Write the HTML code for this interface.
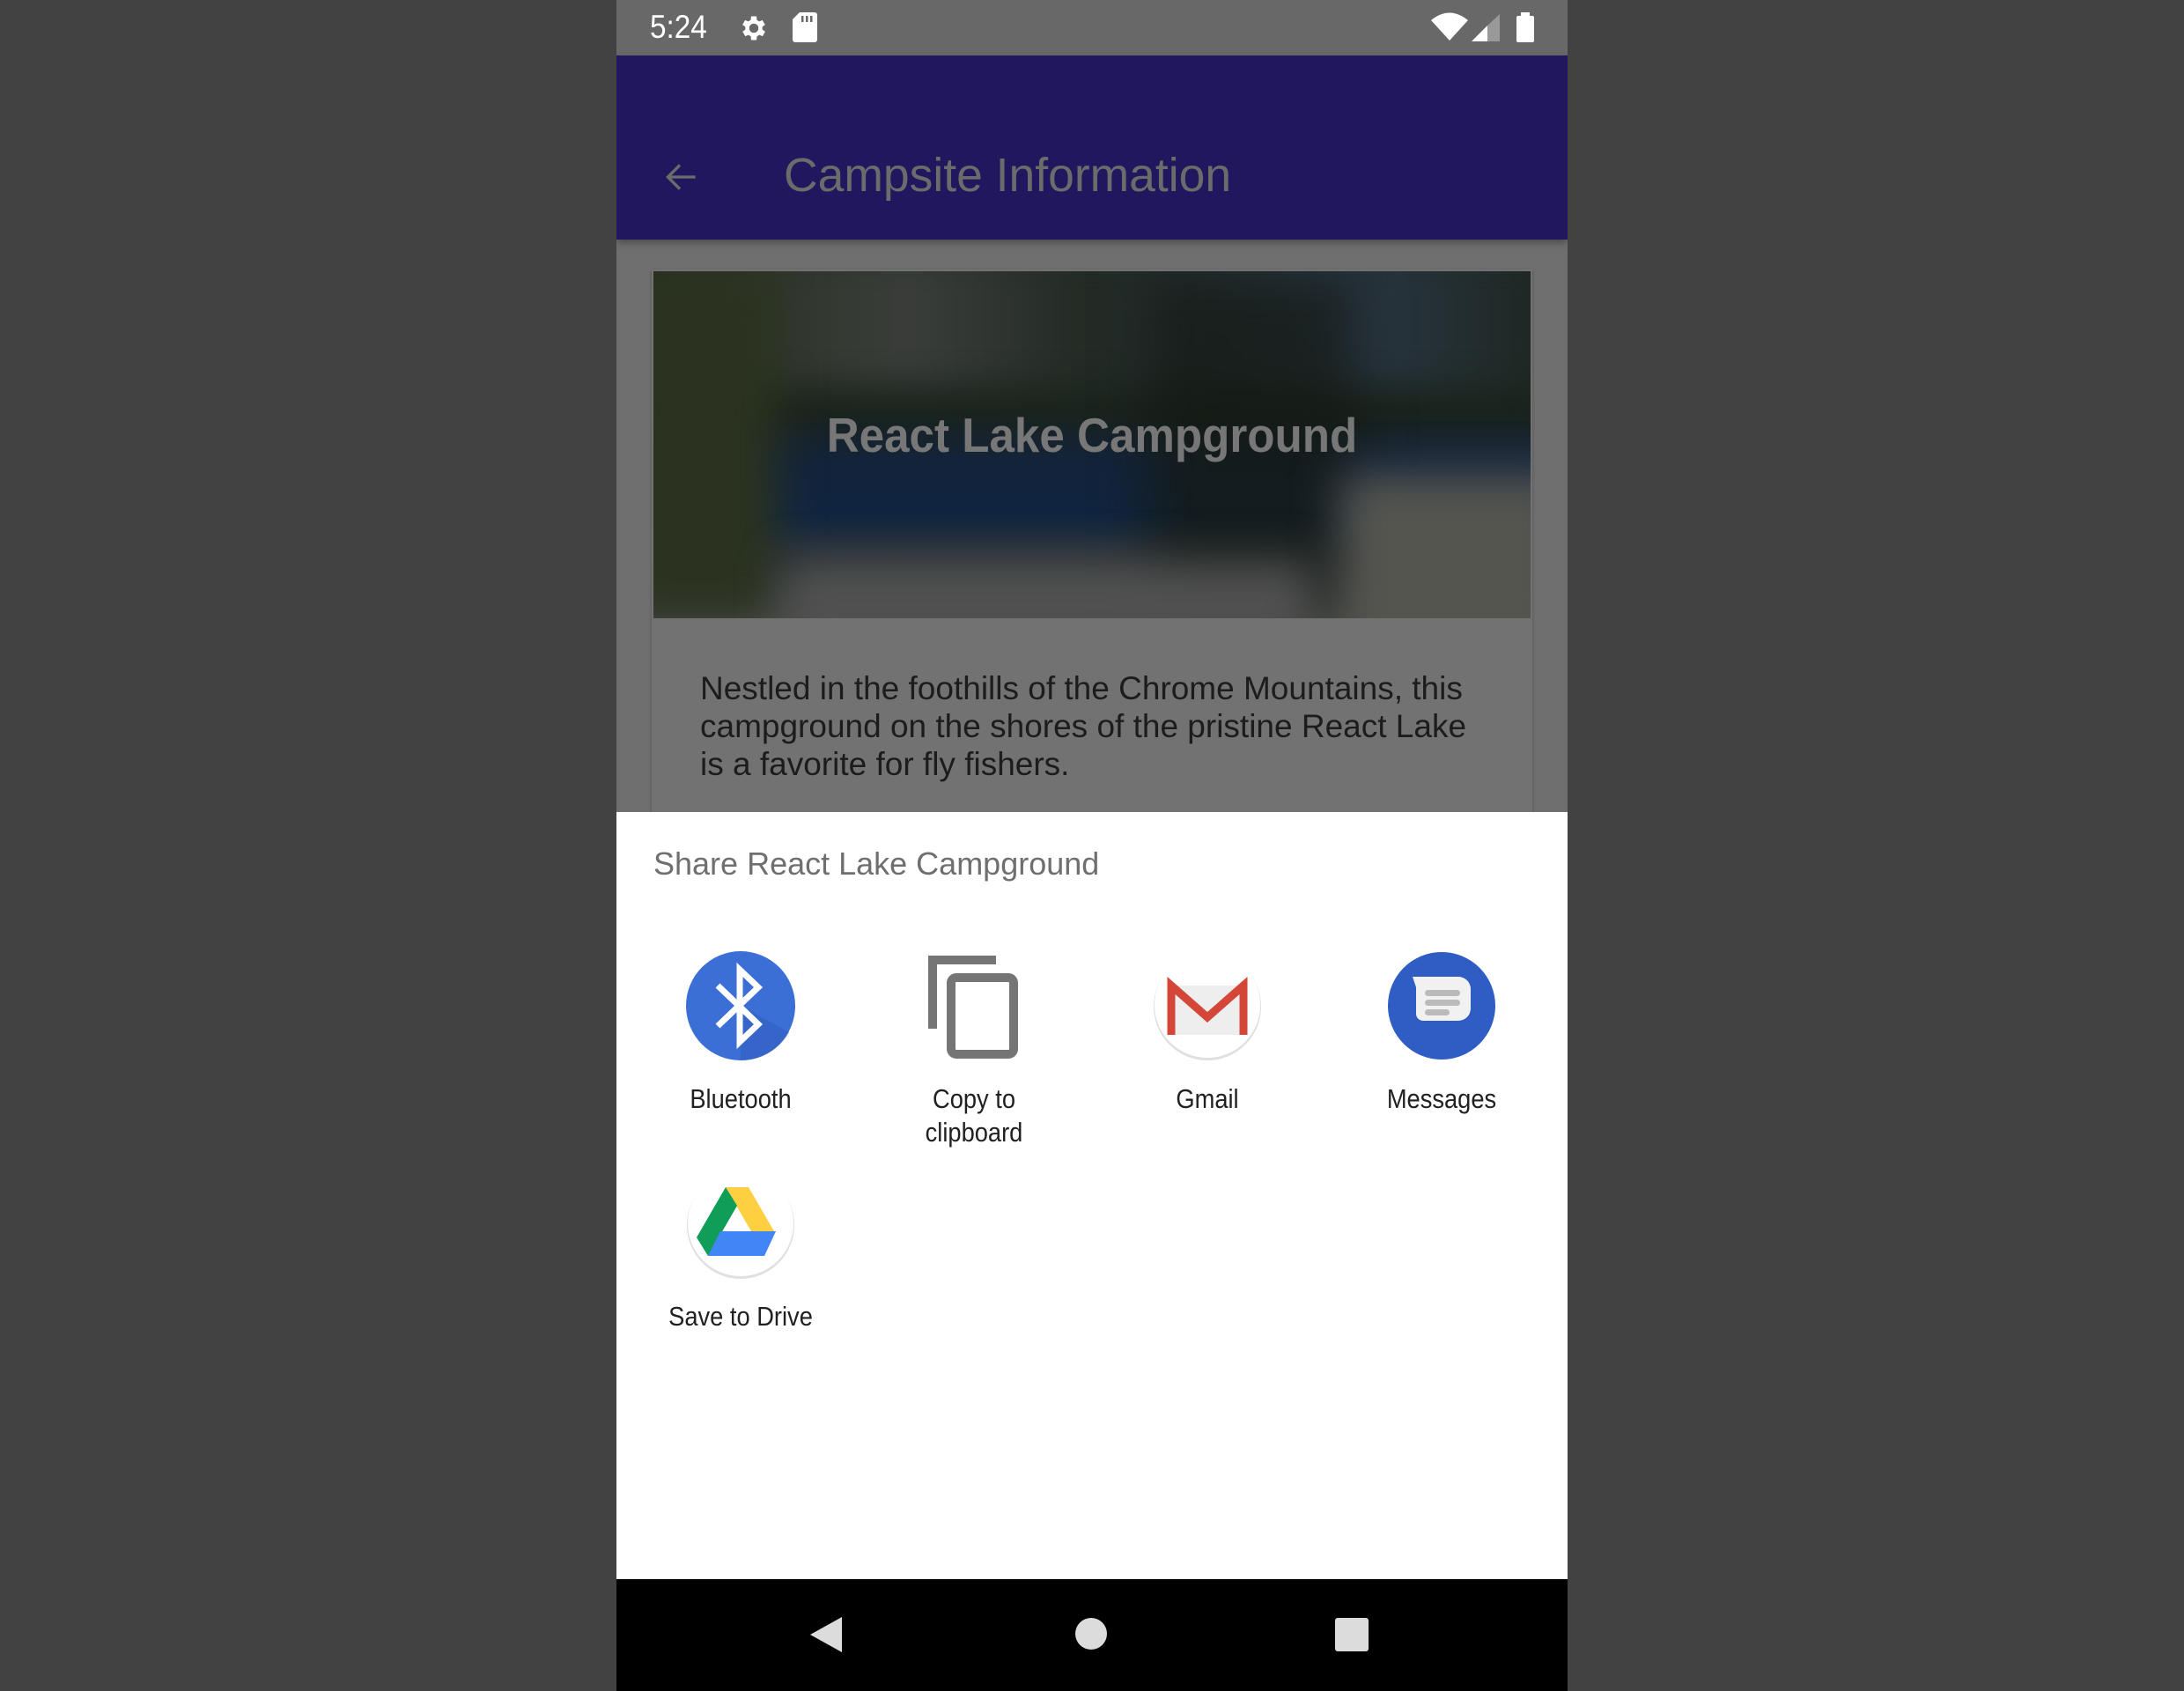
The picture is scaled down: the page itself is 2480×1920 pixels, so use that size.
<!DOCTYPE html>
<html><head><meta charset="utf-8"><style>
*{margin:0;padding:0;box-sizing:border-box}
body{width:2480px;height:1920px;background:#424242;position:relative;overflow:hidden;font-family:"Liberation Sans",sans-serif}
.ph{position:absolute;left:700px;top:0;width:1080px;height:1920px;background:#6f6f6f;overflow:hidden}
.abs{position:absolute}
.lbl{position:absolute;width:260px;text-align:center;font-size:31px;color:#212121;line-height:38px;transform:scaleX(0.88)}
</style></head><body>
<div class="ph">
 <div class="abs" style="left:0;top:0;width:1080px;height:63px;background:#686868"></div>
 <div class="abs" style="left:38px;top:10px;font-size:37px;color:#fff;transform:scaleX(0.9);transform-origin:left">5:24</div>
 <svg class="abs" style="left:138px;top:14px" width="36" height="36" viewBox="0 0 24 24"><path fill="#fff" d="M19.4 13a7.5 7.5 0 000-2l2.1-1.6-2-3.5-2.5 1a7 7 0 00-1.7-1L15 3h-4l-.4 2.9a7 7 0 00-1.7 1l-2.5-1-2 3.5L6.6 11a7.5 7.5 0 000 2l-2.1 1.6 2 3.5 2.5-1a7 7 0 001.7 1L11 21h4l.4-2.9a7 7 0 001.7-1l2.5 1 2-3.5zM13 15.5a3.5 3.5 0 110-7 3.5 3.5 0 010 7z" transform="translate(-1 0)"/></svg>
 <svg class="abs" style="left:200px;top:14px" width="28" height="34" viewBox="0 0 28 34"><path fill="#fff" d="M8 0h17a3 3 0 013 3v28a3 3 0 01-3 3H3a3 3 0 01-3-3V8z"/><rect x="10" y="4" width="2.5" height="7" fill="#686868"/><rect x="15" y="4" width="2.5" height="7" fill="#686868"/><rect x="20" y="4" width="2.5" height="7" fill="#686868"/></svg>
 <svg class="abs" style="left:925px;top:14px" width="42" height="32" viewBox="0 0 42 32"><path fill="#fff" d="M0 9Q21-8 42 9L21 32z"/></svg>
 <svg class="abs" style="left:971px;top:16px" width="32" height="31" viewBox="0 0 32 31"><path fill="#fff" d="M0 31L18 13V31z"/><path fill="#999" d="M18 13L32 0V31H18z"/></svg>
 <div class="abs" style="left:1022px;top:18px;width:20px;height:30px;background:#fff;border-radius:2px"></div>
 <div class="abs" style="left:1027px;top:14px;width:10px;height:5px;background:#fff"></div>

 <div class="abs" style="left:0;top:63px;width:1080px;height:209px;background:#21175e;box-shadow:0 4px 8px rgba(0,0,0,.3)"></div>
 <svg class="abs" style="left:48px;top:176px" width="50" height="50" viewBox="0 0 24 24"><path fill="none" stroke="#6b6b6b" stroke-width="1.6" d="M20 12H5M11.5 5.5L5 12l6.5 6.5"/></svg>
 <div class="abs" style="left:190px;top:168px;font-size:54px;color:#6b6b6b;transform:scaleX(0.99);transform-origin:left">Campsite Information</div>

 <div class="abs" style="left:40px;top:306px;width:1000px;height:620px;background:#727272;box-shadow:0 1px 3px rgba(0,0,0,.3)"></div>
 <div class="abs" style="left:42px;top:308px;width:996px;height:394px;overflow:hidden;background:linear-gradient(180deg,#1f2a25 0%,#1a231c 40%,#13233a 55%,#102540 70%,#2a3036 85%,#4a4a48 100%)">
  <div class="abs" style="left:-20px;top:-20px;width:1040px;height:150px;filter:blur(20px);background:linear-gradient(90deg,#27301f,#3a3d3a 30%,#222a24 50%,#2c3a4a 75%,#1e2620)"></div>
  <div class="abs" style="left:-40px;top:0;width:180px;height:394px;filter:blur(25px);background:#2b3320"></div>
  <div class="abs" style="left:560px;top:0;width:240px;height:394px;filter:blur(30px);background:rgba(20,25,20,.75)"></div>
  <div class="abs" style="left:780px;top:230px;width:260px;height:200px;filter:blur(25px);background:#555550"></div>
  <div class="abs" style="left:150px;top:330px;width:600px;height:100px;filter:blur(25px);background:#505150"></div>
 </div>
 <div class="abs" style="left:42px;top:462px;width:996px;text-align:center;font-size:55px;font-weight:bold;color:#777;transform:scaleX(0.93)">React Lake Campground</div>
 <div class="abs" style="left:95px;top:760px;width:980px;font-size:37px;line-height:43px;color:#1c1c1c">Nestled in the foothills of the Chrome Mountains, this<br>campground on the shores of the pristine React Lake<br>is a favorite for fly fishers.</div>

 <div class="abs" style="left:0;top:922px;width:1080px;height:871px;background:#fff"></div>
 <div class="abs" style="left:42px;top:960px;font-size:36px;color:#6f6f6f">Share React Lake Campground</div>

 <svg class="abs" style="left:78px;top:1079px" width="126" height="126" viewBox="0 0 126 126"><circle cx="63" cy="63" r="62" fill="#3b6fd6"/><path d="M63 63l55 30a62 62 0 01-55 32z" fill="#345fc0" opacity=".6"/><path fill="none" stroke="#fff" stroke-width="7" d="M37 40l46 44-21 20V22l21 20-46 44"/></svg>
 <div class="lbl" style="left:11px;top:1229px">Bluetooth</div>

 <svg class="abs" style="left:354px;top:1084px" width="104" height="118" viewBox="0 0 104 118"><path fill="none" stroke="#757575" stroke-width="10" d="M5 84V6h72"/><rect x="26" y="26" width="71" height="87" rx="6" fill="none" stroke="#757575" stroke-width="10"/></svg>
 <div class="lbl" style="left:276px;top:1229px">Copy to<br>clipboard</div>

 <svg class="abs" style="left:608px;top:1079px" width="126" height="126" viewBox="0 0 126 126"><circle cx="63" cy="64" r="61" fill="#e0e0e0"/><circle cx="63" cy="62" r="60" fill="#fff"/><rect x="22" y="40" width="84" height="56" fill="#eee"/><path d="M22 96V40l41 36 41-36v56" fill="none" stroke="#d44638" stroke-width="9"/></svg>
 <div class="lbl" style="left:541px;top:1229px">Gmail</div>

 <svg class="abs" style="left:874px;top:1079px" width="126" height="126" viewBox="0 0 126 126"><circle cx="63" cy="63" r="61" fill="#2f5dc4"/><path d="M30 30h52a14 14 0 0114 14v22a14 14 0 01-14 14H42a8 8 0 01-8-8V42z" fill="#f1f1f1"/><rect x="44" y="45" width="40" height="7" rx="3.5" fill="#bbb"/><rect x="44" y="56" width="40" height="7" rx="3.5" fill="#bbb"/><rect x="44" y="67" width="28" height="7" rx="3.5" fill="#bbb"/></svg>
 <div class="lbl" style="left:807px;top:1229px">Messages</div>

 <svg class="abs" style="left:78px;top:1326px" width="126" height="126" viewBox="0 0 126 126"><circle cx="63" cy="65" r="61" fill="#e0e0e0"/><circle cx="63" cy="63" r="60" fill="#fff"/><path d="M46 22h26l29 50H75z" fill="#fdcf41"/><path d="M46 22L13 79l13 21 33-57z" fill="#0f9d58"/><path d="M26 100h64l13-28H40z" fill="#4285f4"/></svg>
 <div class="lbl" style="left:11px;top:1476px">Save to Drive</div>

 <div class="abs" style="left:0;top:1793px;width:1080px;height:127px;background:#000"></div>
 <svg class="abs" style="left:218px;top:1834px" width="40" height="44" viewBox="0 0 40 44"><path d="M38 2V42L2 22z" fill="#dcdcdc"/></svg>
 <div class="abs" style="left:521px;top:1837px;width:36px;height:36px;border-radius:50%;background:#dcdcdc"></div>
 <div class="abs" style="left:816px;top:1837px;width:38px;height:38px;border-radius:3px;background:#dcdcdc"></div>
</div>
</body></html>
